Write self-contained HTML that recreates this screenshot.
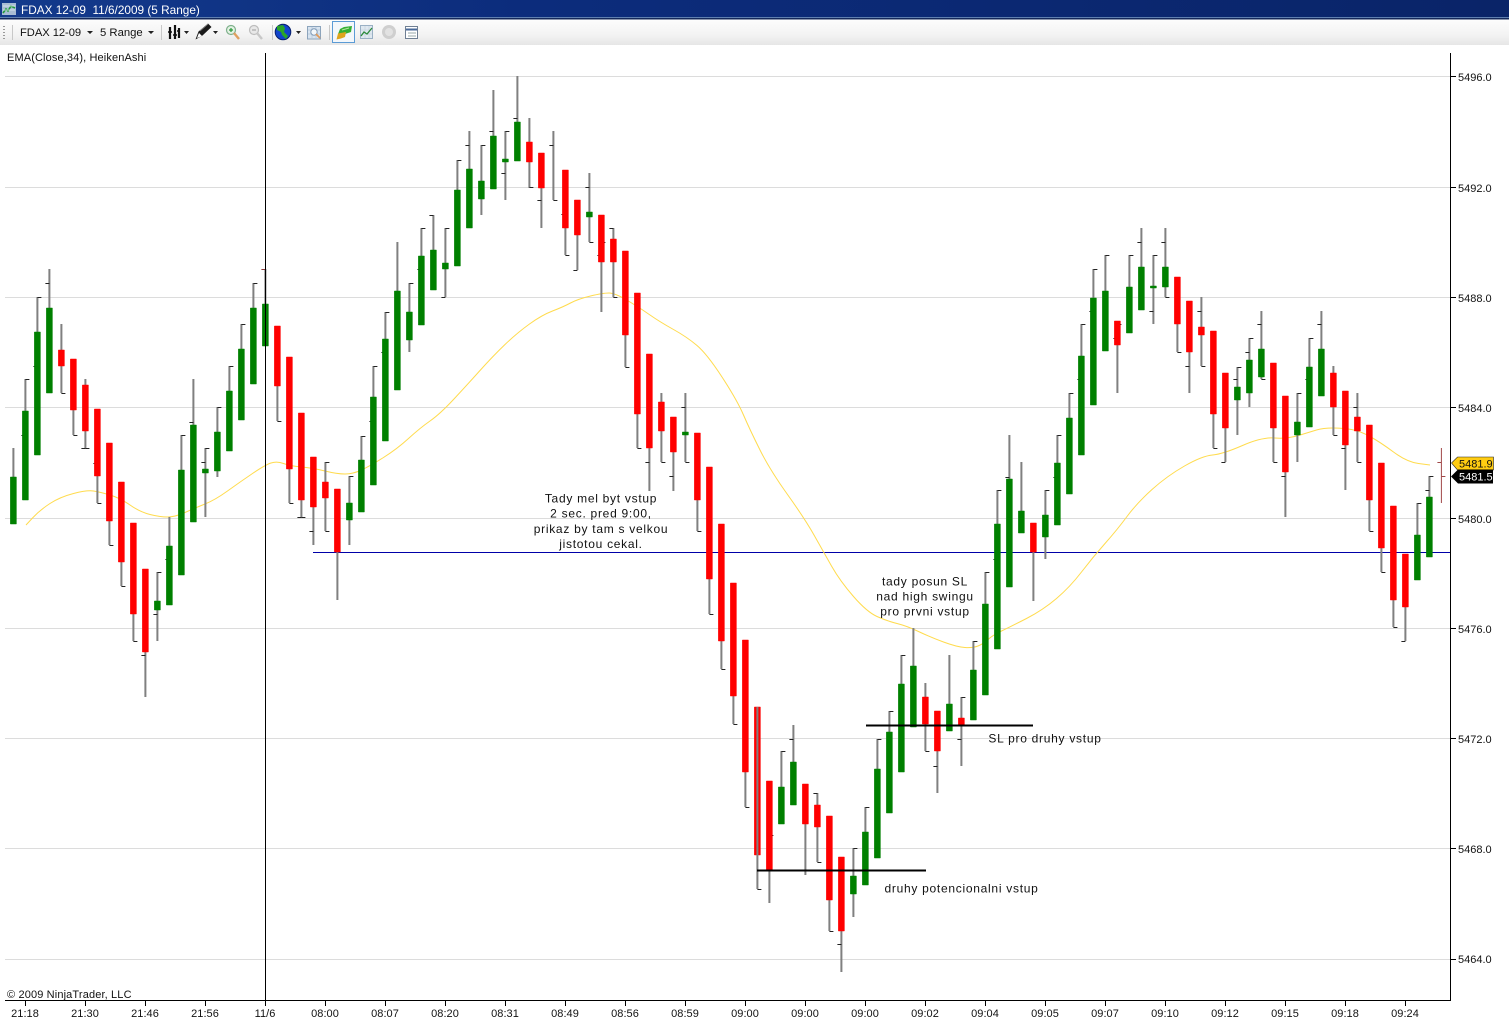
<!DOCTYPE html>
<html><head><meta charset="utf-8"><title>FDAX 12-09</title>
<style>html,body{margin:0;padding:0;background:#fff;overflow:hidden}svg{display:block}text{font-family:"Liberation Sans",Arial,sans-serif;font-size:11px;fill:#111}.a{font-size:12px;letter-spacing:.72px;text-anchor:middle}.t{font-size:11px;letter-spacing:.05px;text-anchor:middle}</style>
</head><body>
<svg xmlns="http://www.w3.org/2000/svg" width="1509" height="1023" viewBox="0 0 1509 1023">
<defs>
<linearGradient id="tb" x1="0" x2="1" y1="0" y2="0"><stop offset="0" stop-color="#133a8c"/><stop offset=".35" stop-color="#0c2c7c"/><stop offset="1" stop-color="#0a2468"/></linearGradient>
<linearGradient id="tool" x1="0" x2="0" y1="0" y2="1"><stop offset="0" stop-color="#fcfcfc"/><stop offset=".6" stop-color="#f3f3f3"/><stop offset="1" stop-color="#e6e6e6"/></linearGradient>
</defs>
<rect width="1509" height="1023" fill="#fff"/>
<!-- title bar -->
<rect width="1509" height="17" fill="url(#tb)"/>
<rect y="17" width="1509" height="1" fill="#5f7fb0"/>
<rect y="18" width="1509" height="1.5" fill="#14285a"/>
<rect x="2" y="3" width="14" height="12" fill="#a8bcd4"/>
<path d="M3 13l3-4 2 2 3-5 4 2" fill="none" stroke="#1f9a3a" stroke-width="1.6"/><path d="M3 6h12M3 10h12" stroke="#e4ecf4" stroke-width=".7"/>
<text x="21" y="14" xml:space="preserve" style="font-size:11.8px;fill:#fff;white-space:pre">FDAX 12-09  11/6/2009 (5 Range)</text>
<!-- toolbar -->
<rect y="20" width="1509" height="25" fill="url(#tool)"/>
<path d="M4 26v1M4 29v1M4 32v1M4 35v1M4 38v1" stroke="#999" stroke-width="2"/>
<path d="M12.500 25V40M161.500 25V40M272.500 25V40M329.500 25V40" stroke="#c8c8c8"/>
<text x="20" y="36" style="font-size:11.2px;letter-spacing:-.05px">FDAX 12-09</text>
<text x="100" y="36" style="font-size:11.300px">5 Range</text>
<path d="M87 31h6l-3 3zM148 31h6l-3 3zM184 31h5l-2.500 3zM213 31h5l-2.500 3zM296 31h5l-2.500 3z" fill="#222"/>
<path d="M170 27v12M175 25v14M179 28v10" stroke="#111" stroke-width="2.200"/><path d="M168 32h4M173 35h4M177 31h3" stroke="#111" stroke-width="1.500"/>
<path d="M195.500 39.500l3-8 9.500-8 3.500 3.500-9 8.500z" fill="#1a1a1a"/><path d="M197 38l2-5 3 3z" fill="#fff"/><path d="M200 31l8-7" stroke="#888" stroke-width=".8"/>
<circle cx="231" cy="30" r="4.500" fill="#e4f2e4" stroke="#7fb08c" stroke-width="1.200"/><path d="M229 30h4M231 28v4" stroke="#2a9a3a" stroke-width="1.200"/><path d="M234 33l5 6" stroke="#e0a060" stroke-width="2.400"/>
<circle cx="254" cy="30" r="4.500" fill="#e8e8e8" stroke="#bdbdbd" stroke-width="1.200"/><path d="M252 30h4" stroke="#aaa" stroke-width="1.200"/><path d="M257 33l5 6" stroke="#c8c8c8" stroke-width="2.400"/>
<circle cx="283" cy="32" r="7.800" fill="#1144cc" stroke="#08206a"/><path d="M277 26l6-1 2 3-1 4 4 4-2 3-4-4-1-3-4-2z" fill="#2aa52a"/>
<rect x="307.500" y="26.500" width="13" height="12.500" fill="#d8e4f0" stroke="#8ca4bc"/><path d="M308 30h12M308 34h12M312 27v12M316 27v12" stroke="#b4c6d8" stroke-width=".7"/><circle cx="314" cy="32" r="3.200" fill="#f4f8fb" stroke="#7f9ab8"/><path d="M316 34l4 4" stroke="#e09a5a" stroke-width="1.800"/>
<rect x="332.500" y="21.500" width="22" height="21" fill="#f3f7fb" stroke="#5b9bd5"/>
<path d="M338 34l2-5 4-2 8-1-1 6-6 2z" fill="#35b035"/><path d="M336.500 39.500l1.500-6 8-1.500-1 5-4 1.500z" fill="#dfa51c"/><path d="M342 30l7-2" stroke="#b6e6a0" stroke-width="1"/>
<rect x="360.500" y="25.500" width="12" height="13" fill="#dfe8f0" stroke="#9ab0c4"/><path d="M361 30h11M361 34h11M365 26v12M369 26v12" stroke="#c0ccd8" stroke-width=".6"/><path d="M361 36l3-4 3 2 5-6" fill="none" stroke="#2a8a3a" stroke-width="1.300"/>
<circle cx="389" cy="32" r="7" fill="#cfcfcf"/><circle cx="389" cy="32" r="4" fill="#e2e2e2"/>
<rect x="405.500" y="26.500" width="12" height="12" fill="#fff" stroke="#6f7f93"/><path d="M406 29.500h11" stroke="#4a6a9a" stroke-width="2"/><path d="M408 33h8M408 36h8" stroke="#9aa" stroke-width="1"/>
<!-- grid -->
<path d="M5 76.500H1450M5 187.500H1450M5 297.500H1450M5 407.500H1450M5 518.500H1450M5 628.500H1450M5 738.500H1450M5 848.500H1450M5 959.500H1450" stroke="#dcdcdc"/>
<text x="7" y="61" style="letter-spacing:.12px">EMA(Close,34), HeikenAshi</text>
<path d="M313 552.500H1450" stroke="#0000a8"/>
<path fill="none" stroke="#ffdb4d" stroke-width="1" d="M26 525L33 517.500Q40 510 50 503.500Q60 497 73.500 493.500Q87 490 93.500 491Q100 492 110 495Q120 498 130 505Q140 512 150 514.500Q160 517 167.500 517Q175 517 185 512.500Q195 508 205 504Q215 500 227.500 491Q240 482 252.500 473.500Q265 465 271 463Q277 461 283.500 463.500Q290 466 301.500 467Q313 468 325 471Q337 474 345 474Q353 474 361.500 470Q370 466 383.500 457.500Q397 449 408.500 438.500Q420 428 430 421Q440 414 453.500 399.500Q467 385 480 370.500Q493 356 505 344.500Q517 333 529.500 324Q542 315 552.500 311Q563 307 570.500 303Q578 299 590.500 296Q603 293 609 293Q615 293 627.500 300.500Q640 308 650 315Q660 322 673.500 329.500Q687 337 697 345.500Q707 354 722 377Q737 400 743.500 415Q750 430 760 450Q770 470 787.500 494.500Q805 519 814 535Q823 551 831.500 566Q840 581 853.500 596.500Q867 612 877 616.500Q887 621 897 623.500Q907 626 918.500 631.500Q930 637 943.500 642Q957 647 965 647.500Q973 648 978 646Q983 644 988 639.500Q993 635 1001.500 631Q1010 627 1026.500 618.500Q1043 610 1056.500 598.500Q1070 587 1081.500 572Q1093 557 1105 543.500Q1117 530 1127 516.500Q1137 503 1152 489.500Q1167 476 1184.500 466Q1202 456 1212.500 455Q1223 454 1242.500 445.500Q1262 437 1274.500 438Q1287 439 1298.500 435.500Q1310 432 1316.500 430Q1323 428 1333 428Q1343 428 1351.500 429.500Q1360 431 1370 436.500Q1380 442 1393.500 452Q1407 462 1418.500 463.500L1430 465"/>
<g transform="translate(.4 0)">
<!-- wicks -->
<path fill="none" stroke="#808080" stroke-width="2" d="M13 448V477M25 379V411M37 297V332M49 269V308M61 324V393M73 410V435M85 379V448M97 476V503M109 521V545M121 562V586M133 614V641M145 652V697M157 572V641M169 517V546M181 435V470M193 379V425M205 448V517M217 407V477M229 366V391M241 324V349M253 283V308M265 269V304M277 386V421M289 469V503M301 500V517M313 507V545M325 462V531M337 552V600M349 476V545M361 436V460M373 366V397M385 312V339M397 242V291M409 283V352M421 228V256M433 215V250M445 228V297M457 160V190M469 131V169M481 145V215M493 90V136M505 131V200M517 76V122M529 118V188M541 188V228M553 131V200M565 228V255M577 235V270M589 173V242M601 262V312M613 228V297M625 335V367M637 414V448M649 448V491M661 393V462M673 452V491M685 393V462M697 500V531M709 579V614M721 641V669M733 696V724M745 772V807M769 870V903M781 751V787M793 725V762M805 824V875M817 793V862M829 900V931M841 931V972M853 848V917M865 807V832M877 739V769M889 711V732M901 655V684M913 628V666M925 683V751M937 751V793M949 655V704M961 697V766M973 641V670M985 572V604M997 490V524M1009 435V479M1021 462V511M1033 552V601M1045 490V559M1057 435V463M1069 393V418M1081 324V356M1093 269V298M1105 255V291M1117 345V393M1129 255V287M1141 228V267M1153 255V324M1165 228V297M1177 324V352M1189 352V393M1201 297V366M1213 414V448M1225 428V462M1237 367V435M1249 338V407M1261 311V379M1273 428V462M1285 472V517M1297 393V462M1309 338V367M1321 311V349M1333 366V435M1345 445V490M1357 393V462M1369 500V531M1381 548V572M1393 600V627M1405 607V641M1417 503V535M1429 476V497"/>
<!-- right ticks -->
<path fill="none" stroke="#222" stroke-width="1" d="M25 379.500h4M37 297.500h4M61 393.500h4M73 435.500h4M85 448.500h4M97 503.500h4M109 545.500h4M121 586.500h4M133 641.500h4M157 572.500h4M181 435.500h4M205 448.500h4M217 407.500h4M229 366.500h4M241 324.500h4M253 283.500h4M277 421.500h4M289 503.500h4M301 517.500h4M325 462.500h4M325 531.500h4M349 476.500h4M361 436.500h4M373 366.500h4M385 312.500h4M409 283.500h4M421 228.500h4M445 228.500h4M457 160.500h4M481 145.500h4M505 131.500h4M529 187.500h4M553 200.500h4M565 255.500h4M589 242.500h4M601 242.500h4M613 297.500h4M625 367.500h4M637 448.500h4M661 462.500h4M685 462.500h4M697 531.500h4M709 614.500h4M721 669.500h4M733 724.500h4M745 807.500h4M757 889.500h4M769 835.500h4M781 751.500h4M817 862.500h4M829 931.500h4M853 848.500h4M865 807.500h4M877 739.500h4M889 711.500h4M901 655.500h4M925 751.500h4M961 697.500h4M973 641.500h4M985 572.500h4M997 490.500h4M1045 490.500h4M1057 435.500h4M1069 393.500h4M1081 324.500h4M1093 269.500h4M1105 255.500h4M1117 324.500h4M1129 255.500h4M1153 255.500h4M1165 297.500h4M1177 352.500h4M1201 366.500h4M1213 448.500h4M1237 367.500h4M1249 338.500h4M1261 379.500h4M1273 462.500h4M1297 393.500h4M1309 338.500h4M1333 435.500h4M1357 462.500h4M1369 531.500h4M1381 572.500h4M1393 627.500h4M1417 503.500h4M1429 476.500h4"/>
<!-- left ticks -->
<path fill="none" stroke="#222" stroke-width="1" d="M25 435.500h-4M37 366.500h-4M49 283.500h-4M85 448.500h-4M97 463.500h-4M145 655.500h-4M157 614.500h-4M169 559.500h-4M193 422.500h-4M205 462.500h-4M301 517.500h-4M313 531.500h-4M373 421.500h-4M385 352.500h-4M421 269.500h-4M433 215.500h-4M445 297.500h-4M469 145.500h-4M493 131.500h-4M505 173.500h-4M517 118.500h-4M541 200.500h-4M553 145.500h-4M565 214.500h-4M577 270.500h-4M589 187.500h-4M601 255.500h-4M613 228.500h-4M649 462.500h-4M673 476.500h-4M685 407.500h-4M793 739.500h-4M817 793.500h-4M841 944.500h-4M937 766.500h-4M961 739.500h-4M997 559.500h-4M1009 477.500h-4M1057 477.500h-4M1081 379.500h-4M1093 311.500h-4M1117 338.500h-4M1141 242.500h-4M1153 311.500h-4M1165 242.500h-4M1189 366.500h-4M1201 311.500h-4M1225 462.500h-4M1237 379.500h-4M1249 352.500h-4M1261 324.500h-4M1285 476.500h-4M1309 379.500h-4M1321 324.500h-4M1345 448.500h-4M1357 407.500h-4M1405 641.500h-4M1429 490.500h-4"/>
<path fill="none" stroke="#8b3a3a" stroke-width="1" d="M265 269.500h-4"/>
<!-- green bodies -->
<path fill="#008000" stroke="#008000" stroke-width=".5" stroke-linejoin="round" d="M10 477h6V524h-6zM22 411h6V500h-6zM34 332h6V455h-6zM46 308h6V393h-6zM154 601h6V610h-6zM166 546h6V605h-6zM178 470h6V575h-6zM190 425h6V522h-6zM202 469h6V473h-6zM214 432h6V471h-6zM226 391h6V451h-6zM238 349h6V420h-6zM250 308h6V384h-6zM262 304h6V346h-6zM346 503h6V520h-6zM358 460h6V512h-6zM370 397h6V485h-6zM382 339h6V441h-6zM394 291h6V390h-6zM406 312h6V340h-6zM418 256h6V325h-6zM430 250h6V290h-6zM442 263h6V269h-6zM454 190h6V266h-6zM466 169h6V228h-6zM478 181h6V199h-6zM490 136h6V189h-6zM502 159h6V162h-6zM514 122h6V161h-6zM586 212h6V217h-6zM682 432h6V435h-6zM778 787h6V824h-6zM790 762h6V805h-6zM850 876h6V894h-6zM862 832h6V885h-6zM874 769h6V858h-6zM886 732h6V813h-6zM898 684h6V772h-6zM910 666h6V727h-6zM946 704h6V731h-6zM970 670h6V720h-6zM982 604h6V695h-6zM994 524h6V649h-6zM1006 479h6V587h-6zM1018 511h6V533h-6zM1042 515h6V537h-6zM1054 463h6V525h-6zM1066 418h6V494h-6zM1078 356h6V455h-6zM1090 298h6V405h-6zM1102 291h6V351h-6zM1126 287h6V333h-6zM1138 267h6V310h-6zM1150 286h6V288h-6zM1162 267h6V287h-6zM1234 387h6V400h-6zM1246 360h6V393h-6zM1258 349h6V377h-6zM1294 422h6V435h-6zM1306 367h6V427h-6zM1318 349h6V396h-6zM1414 535h6V580h-6zM1426 497h6V557h-6z"/>
<!-- red bodies -->
<path fill="#ff0000" stroke="#ff0000" stroke-width=".5" stroke-linejoin="round" d="M58 350h6V366h-6zM70 359h6V410h-6zM82 385h6V431h-6zM94 409h6V476h-6zM106 443h6V521h-6zM118 482h6V562h-6zM130 523h6V614h-6zM142 569h6V652h-6zM274 326h6V386h-6zM286 357h6V469h-6zM298 413h6V500h-6zM310 457h6V507h-6zM322 482h6V498h-6zM334 489h6V552h-6zM526 142h6V162h-6zM538 153h6V188h-6zM562 170h6V228h-6zM574 200h6V235h-6zM598 215h6V262h-6zM610 239h6V262h-6zM622 251h6V335h-6zM634 293h6V414h-6zM646 354h6V448h-6zM658 402h6V431h-6zM670 417h6V452h-6zM694 433h6V500h-6zM706 467h6V579h-6zM718 524h6V641h-6zM730 583h6V696h-6zM742 640h6V772h-6zM754 707h6V855h-6zM766 781h6V870h-6zM802 784h6V824h-6zM814 805h6V827h-6zM826 816h6V900h-6zM838 857h6V931h-6zM922 697h6V724h-6zM934 711h6V751h-6zM958 718h6V725h-6zM1030 523h6V552h-6zM1114 321h6V345h-6zM1174 277h6V324h-6zM1186 301h6V352h-6zM1198 327h6V335h-6zM1210 331h6V414h-6zM1222 373h6V428h-6zM1270 363h6V428h-6zM1282 396h6V472h-6zM1330 373h6V407h-6zM1342 391h6V445h-6zM1354 417h6V431h-6zM1366 425h6V500h-6zM1378 463h6V548h-6zM1390 506h6V600h-6zM1402 554h6V607h-6z"/>
<path fill="none" stroke="#808080" stroke-width="2" d="M757 707V889"/>
<path fill="none" stroke="#a04848" stroke-width="1" d="M1441 448V503M1441 462.500h-4M1441 476.500h4"/>
</g>
<!-- drawn lines -->
<path d="M757 870.500H926M866 725.500H1033" stroke="#000" stroke-width="2"/>
<path d="M265.500 53V1000" stroke="#000" stroke-width="1"/>
<!-- axes -->
<path d="M1450.500 53V1001M5 1000.500H1451" stroke="#000"/>
<path d="M1451 76.500h5M1451 187.500h5M1451 297.500h5M1451 407.500h5M1451 518.500h5M1451 628.500h5M1451 738.500h5M1451 848.500h5M1451 959.500h5M25.500 1001v5M85.500 1001v5M145.500 1001v5M205.500 1001v5M265.500 1001v5M325.500 1001v5M385.500 1001v5M445.500 1001v5M505.500 1001v5M565.500 1001v5M625.500 1001v5M685.500 1001v5M745.500 1001v5M805.500 1001v5M865.500 1001v5M925.500 1001v5M985.500 1001v5M1045.500 1001v5M1105.500 1001v5M1165.500 1001v5M1225.500 1001v5M1285.500 1001v5M1345.500 1001v5M1405.500 1001v5" stroke="#000"/>
<text x="1458" y="81">5496.0</text><text x="1458" y="192">5492.0</text><text x="1458" y="302">5488.0</text><text x="1458" y="412">5484.0</text><text x="1458" y="523">5480.0</text><text x="1458" y="633">5476.0</text><text x="1458" y="743">5472.0</text><text x="1458" y="853">5468.0</text><text x="1458" y="963">5464.0</text>
<text x="7" y="998" style="letter-spacing:.14px">© 2009 NinjaTrader, LLC</text>
<text class="t" x="25" y="1017">21:18</text><text class="t" x="85" y="1017">21:30</text><text class="t" x="145" y="1017">21:46</text><text class="t" x="205" y="1017">21:56</text><text class="t" x="265" y="1017">11/6</text><text class="t" x="325" y="1017">08:00</text><text class="t" x="385" y="1017">08:07</text><text class="t" x="445" y="1017">08:20</text><text class="t" x="505" y="1017">08:31</text><text class="t" x="565" y="1017">08:49</text><text class="t" x="625" y="1017">08:56</text><text class="t" x="685" y="1017">08:59</text><text class="t" x="745" y="1017">09:00</text><text class="t" x="805" y="1017">09:00</text><text class="t" x="865" y="1017">09:00</text><text class="t" x="925" y="1017">09:02</text><text class="t" x="985" y="1017">09:04</text><text class="t" x="1045" y="1017">09:05</text><text class="t" x="1105" y="1017">09:07</text><text class="t" x="1165" y="1017">09:10</text><text class="t" x="1225" y="1017">09:12</text><text class="t" x="1285" y="1017">09:15</text><text class="t" x="1345" y="1017">09:18</text><text class="t" x="1405" y="1017">09:24</text>
<!-- price markers -->
<path d="M1451.500 463l6-6h36v13h-36z" fill="#ffcc11" stroke="#222" stroke-width=".6"/>
<text x="1459" y="467.500" style="font-size:11px;fill:#111">5481.9</text>
<path d="M1451 476.500l7-7h35v14h-35z" fill="#000"/>
<text x="1459" y="480.500" style="font-size:11px;fill:#fff">5481.5</text>
<!-- annotations -->
<text class="a" x="601" y="502.500">Tady mel byt vstup</text><text class="a" x="601" y="517.500">2 sec. pred 9:00,</text><text class="a" x="601" y="533">prikaz by tam s velkou</text><text class="a" x="601" y="548">jistotou cekal.</text>
<text class="a" x="925" y="585.500">tady posun SL</text><text class="a" x="925" y="600.500">nad high swingu</text><text class="a" x="925" y="615.500">pro prvni vstup</text>
<text class="a" x="1045" y="742.500">SL pro druhy vstup</text>
<text class="a" x="961.500" y="892.500">druhy potencionalni vstup</text>
</svg>
</body></html>
